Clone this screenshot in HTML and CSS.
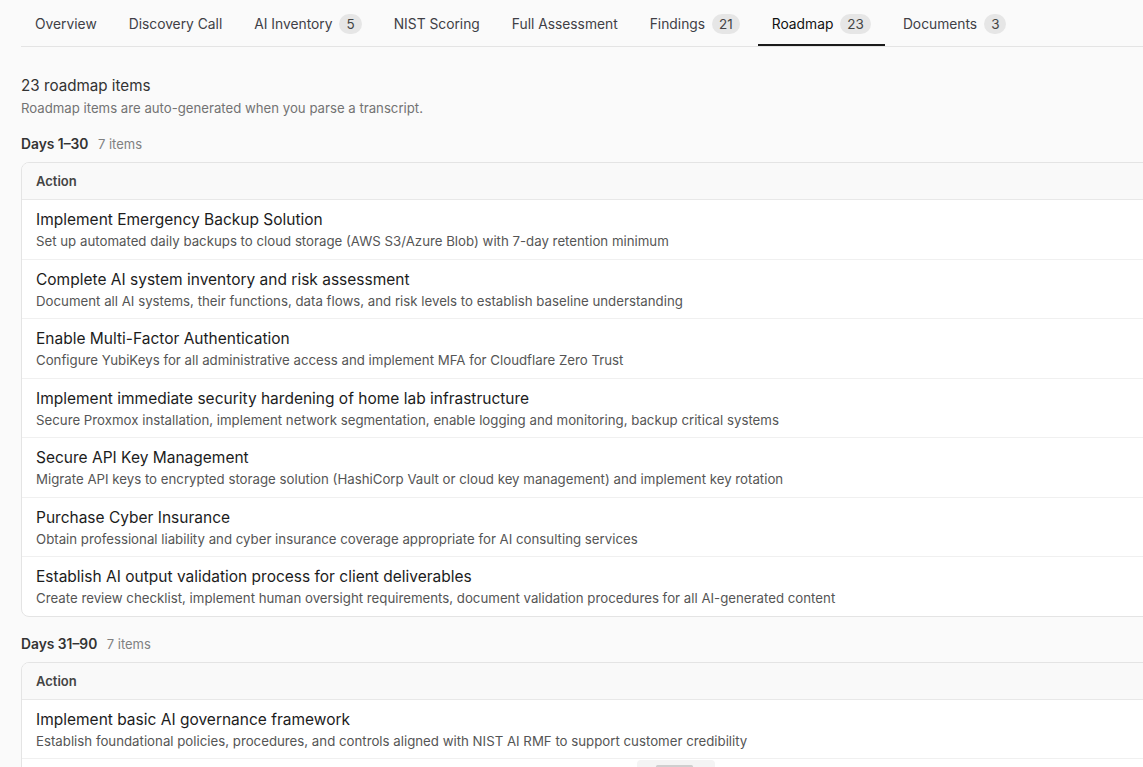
FILE: index.html
```html
<!DOCTYPE html>
<html lang="en">
<head>
    <meta charset="UTF-8">
    <meta name="viewport" content="width=device-width, initial-scale=1.0">
    <title>Roadmap</title>
    <link rel="stylesheet" href="styles.css">
</head>
<body>
    <div class="page">
        <nav class="tabs">
            <a class="tab">Overview</a>
            <a class="tab">Discovery Call</a>
            <a class="tab">AI Inventory <span class="badge">5</span></a>
            <a class="tab">NIST Scoring</a>
            <a class="tab">Full Assessment</a>
            <a class="tab">Findings <span class="badge">21</span></a>
            <a class="tab active">Roadmap <span class="badge">23</span></a>
            <a class="tab">Documents <span class="badge">3</span></a>
        </nav>

        <h3 class="count">23 roadmap items</h3>
        <p class="hint">Roadmap items are auto-generated when you parse a transcript.</p>

        <div class="phase">
            <div class="phase-title">Days 1–30 <span>7 items</span></div>
            <table class="items">
                <thead>
                    <tr><th>Action</th></tr>
                </thead>
                <tbody>
                    <tr><td>
                        <div class="item-title">Implement Emergency Backup Solution</div>
                        <div class="item-desc">Set up automated daily backups to cloud storage (AWS S3/Azure Blob) with 7-day retention minimum</div>
                    </td></tr>
                    <tr><td>
                        <div class="item-title">Complete AI system inventory and risk assessment</div>
                        <div class="item-desc">Document all AI systems, their functions, data flows, and risk levels to establish baseline understanding</div>
                    </td></tr>
                    <tr><td>
                        <div class="item-title">Enable Multi-Factor Authentication</div>
                        <div class="item-desc">Configure YubiKeys for all administrative access and implement MFA for Cloudflare Zero Trust</div>
                    </td></tr>
                    <tr><td>
                        <div class="item-title">Implement immediate security hardening of home lab infrastructure</div>
                        <div class="item-desc">Secure Proxmox installation, implement network segmentation, enable logging and monitoring, backup critical systems</div>
                    </td></tr>
                    <tr><td>
                        <div class="item-title">Secure API Key Management</div>
                        <div class="item-desc">Migrate API keys to encrypted storage solution (HashiCorp Vault or cloud key management) and implement key rotation</div>
                    </td></tr>
                    <tr><td>
                        <div class="item-title">Purchase Cyber Insurance</div>
                        <div class="item-desc">Obtain professional liability and cyber insurance coverage appropriate for AI consulting services</div>
                    </td></tr>
                    <tr><td>
                        <div class="item-title">Establish AI output validation process for client deliverables</div>
                        <div class="item-desc">Create review checklist, implement human oversight requirements, document validation procedures for all AI-generated content</div>
                    </td></tr>
                </tbody>
            </table>
        </div>

        <div class="phase">
            <div class="phase-title">Days 31–90 <span>7 items</span></div>
            <table class="items">
                <thead>
                    <tr><th>Action</th></tr>
                </thead>
                <tbody>
                    <tr><td>
                        <div class="item-title">Implement basic AI governance framework</div>
                        <div class="item-desc">Establish foundational policies, procedures, and controls aligned with NIST AI RMF to support customer credibility</div>
                    </td></tr>
                    <tr><td class="spacer"></td></tr>
                </tbody>
            </table>
        </div>
    </div>

    <div class="dock"><span></span></div>
</body>
</html>
```

FILE: styles.css
```css
body {
    font-family: Inter, "Noto Sans", sans-serif;
    background-color: #fafafa;
    color: #1f1f1f;
    margin: 0;
    overflow: hidden;
}

.page {
    padding: 0 0 0 21px;
    width: 1240px;
}

.tabs {
    display: flex;
    gap: 4px;
    border-bottom: 1px solid #e4e4e4;
}

.tab {
    display: flex;
    align-items: center;
    padding: 14px 14px 10px;
    line-height: 20px;
    font-size: 13.8px;
    color: #3f3f46;
    border-bottom: 2px solid transparent;
    cursor: pointer;
}

.tab.active {
    color: #111;
    border-bottom-color: #1a1a1a;
}

.badge {
    margin-left: 7px;
    min-width: 8px;
    padding: 0 7px;
    height: 20px;
    line-height: 20px;
    border-radius: 10px;
    background-color: #e6e6e6;
    color: #444;
    font-size: 13.5px;
    text-align: center;
}

.count {
    margin: 27px 0 0;
    font-size: 15.2px;
    font-weight: 400;
    line-height: 24px;
    color: #333;
}

.hint {
    margin: 1px 0 0;
    font-size: 13.2px;
    line-height: 18px;
    color: #737373;
}

.phase {
    margin-top: 18px;
}

.phase-title {
    font-size: 13.8px;
    line-height: 18px;
    font-weight: 600;
    color: #333;
    margin-bottom: 9px;
}

.phase-title span {
    font-size: 13px;
    font-weight: 400;
    color: #808080;
    margin-left: 6px;
}

.items {
    width: 100%;
    border-collapse: separate;
    border-spacing: 0;
    background-color: #fff;
    border: 1px solid #e4e4e4;
    border-radius: 8px;
    overflow: hidden;
}

.items th {
    text-align: left;
    font-size: 13px;
    font-weight: 600;
    color: #444;
    line-height: 18px;
    padding: 9px 14px;
    background-color: #f9f9f9;
    border-bottom: 1px solid #e8e8e8;
}

.items td {
    padding: 10px 14px 8.5px;
    border-bottom: 1px solid #f0f0f0;
}

.items tr:last-child td {
    border-bottom: none;
}

.items td.spacer {
    height: 40px;
}

.item-title {
    font-size: 15.5px;
    line-height: 20px;
    color: #1c1c1c;
}

.item-desc {
    margin-top: 2px;
    font-size: 13.25px;
    line-height: 18px;
    color: #555;
}

.dock {
    position: fixed;
    left: 637px;
    top: 760px;
    width: 78px;
    height: 24px;
    background-color: #f4f4f4;
    border-radius: 4px;
}

.dock span {
    position: absolute;
    left: 19px;
    top: 5px;
    width: 37px;
    height: 3px;
    border-radius: 2px;
    background-color: #cfcfcf;
}
```
